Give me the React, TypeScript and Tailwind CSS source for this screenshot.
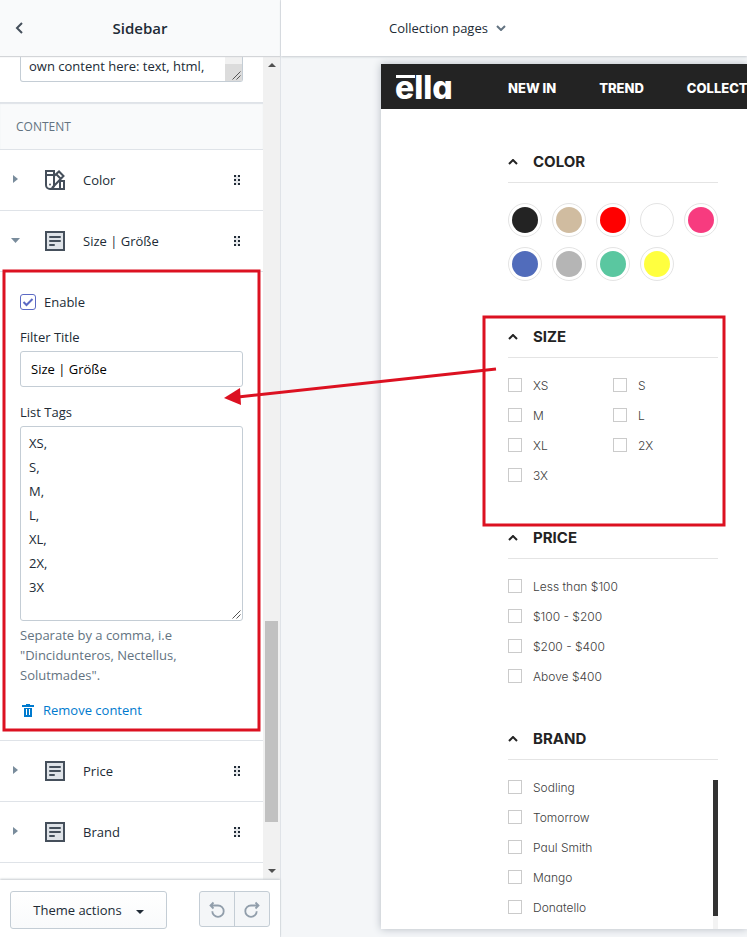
import React from "react";

const UI_FONT = "font-['Open_Sans','Noto_Sans',sans-serif]";
const SHOP_FONT = "font-[Inter,'Liberation_Sans',sans-serif] [font-feature-settings:'cv11']";

function ListIcon() {
  return (
    <svg width="20" height="20" viewBox="0 0 20 20" aria-hidden="true">
      <rect x="1" y="1" width="18" height="18" fill="#dfe3e8" stroke="#454f5b" strokeWidth="2" />
      <path d="M5 6h10M5 10h10M5 14h4" stroke="#454f5b" strokeWidth="2" strokeLinecap="round" />
    </svg>
  );
}

function SwatchIcon() {
  return (
    <svg width="20" height="20" viewBox="0 0 20 20" fill="none" stroke="#454f5b" strokeWidth="2" aria-hidden="true">
      <path d="M1 1h8v14a4 4 0 0 1-8 0z" fill="#fff" />
      <path d="M1 5h8" />
      <path d="M9 6l5-4.500 4.500 4.500L7 18M11 4l5 5" />
      <path d="M5 19h14v-8h-4M15 11v8" />
      <circle cx="5" cy="14.500" r="0.900" fill="#454f5b" stroke="none" />
    </svg>
  );
}

function DragDots() {
  return (
    <svg width="6" height="10" viewBox="0 0 6 10" fill="#212b36" aria-hidden="true">
      <path d="M0 0h6v10H0z" fill="#e4e6e9" />
      {[0, 4, 8].map((y) => (
        <g key={y}>
          <rect x="0" y={y} width="2" height="2" />
          <rect x="4" y={y} width="2" height="2" />
        </g>
      ))}
    </svg>
  );
}

function BlockRow({ title, icon, open = false }: { title: string; icon: React.ReactNode; open?: boolean }) {
  return (
    <div className="flex h-[61px] shrink-0 items-center border-b border-[#dfe3e8] pr-[23px] pl-2.5">
      <button type="button" aria-expanded={open} className="flex flex-1 items-center text-left">
        <svg width="10" height="12" viewBox="0 0 10 12" fill="#798c9c" aria-hidden="true">
          <path d={open ? "M1 3h9L5.500 8z" : "M3 1v8l5-4z"} />
        </svg>
        <span className="ml-[25px]">{icon}</span>
        <span className="ml-[18px]">{title}</span>
      </button>
      <DragDots />
    </div>
  );
}

function Heading({ children }: { children: React.ReactNode }) {
  return (
    <h2 className="border-b border-[#e4e4e4] pb-2.5">
      <button type="button" className="flex w-full items-center text-left text-[15px] leading-5 font-bold text-[#232323]">
        <svg width="10" height="6" viewBox="0 0 10 6" fill="none" stroke="#232323" strokeWidth="2" aria-hidden="true">
          <path d="M1 5l4-4 4 4" />
        </svg>
        <span className="ml-[15px]">{children}</span>
      </button>
    </h2>
  );
}

function Option({ label }: { label: string }) {
  return (
    <label className="flex h-3.5 items-center gap-[11px]">
      <input type="checkbox" className="size-3.5 shrink-0 appearance-none border border-[#cbcbcb] bg-white" />
      <span className="pt-0.5">{label}</span>
    </label>
  );
}

const swatches = [
  ["Black", "bg-[#232323]"],
  ["Beige", "bg-[#d0bca0]"],
  ["Red", "bg-[#ff0000]"],
  ["White", "bg-white"],
  ["Pink", "bg-[#f73b7f]"],
  ["Blue", "bg-[#516cbb]"],
  ["Grey", "bg-[#b5b5b5]"],
  ["Green", "bg-[#5ac7a0]"],
  ["Yellow", "bg-[#ffff3f]"],
];

function EditorSidebar() {
  return (
    <aside className="flex w-[281px] shrink-0 flex-col border-r border-[#dfe3e8] bg-white">
      <header className="relative z-10 flex h-14 shrink-0 items-center bg-[#f9fafb] px-[15px] shadow-[0_1px_1px_#d3d5d8]">
        <button type="button" aria-label="Back">
          <svg width="8" height="12" viewBox="0 0 8 12" fill="none" stroke="#454f5b" strokeWidth="2" aria-hidden="true">
            <path d="M7 1L2 6l5 5" />
          </svg>
        </button>
        <h1 className="flex-1 pr-2 text-center text-[15px] leading-6 font-semibold text-[#212b36]">Sidebar</h1>
      </header>

      <div className="flex min-h-0 flex-1">
        <div className="flex min-w-0 flex-1 flex-col overflow-hidden">
          <div className="shrink-0 px-5 pb-5">
            <div className="relative flex">
              <textarea
                aria-label="Custom content"
                readOnly
                className="h-[26px] w-full resize-none overflow-hidden rounded-b-[3px] border border-t-0 border-[#c4cdd5] px-2 leading-5"
                defaultValue="own content here: text, html,"
              />
              <span className="absolute right-px bottom-px flex h-[25px] w-[17px] flex-col bg-[#f1f1f1]">
                <span className="mt-auto flex h-[17px] items-end justify-end bg-[#dcdcdc] p-px">
                  <ResizeGrip />
                </span>
              </span>
            </div>
          </div>
          <h2 className="flex h-12 shrink-0 items-center border-y border-[#dfe3e8] bg-[#f9fafb] px-4 pt-0.5 text-xs font-medium text-[#637381] shadow-[inset_0_1px_1px_#dfe3e8]">
            CONTENT
          </h2>
          <BlockRow title="Color" icon={<SwatchIcon />} />
          <BlockRow title="Size | Größe" icon={<ListIcon />} open />

          <section className="flex shrink-0 flex-col border-b border-[#dfe3e8] p-5">
            <label className="flex items-center gap-2">
              <span className="relative flex">
                <input
                  type="checkbox"
                  defaultChecked
                  className="peer size-4 appearance-none rounded-[3px] border border-[#5c6ac4] bg-white"
                />
                <svg
                  className="pointer-events-none absolute inset-0 hidden peer-checked:block"
                  width="16"
                  height="16"
                  viewBox="0 0 16 16"
                  fill="none"
                  stroke="#5c6ac4"
                  strokeWidth="2"
                  aria-hidden="true"
                >
                  <path d="M3.500 8l3 3 6-6" />
                </svg>
              </span>
              Enable
            </label>
            <label htmlFor="filter-title" className="mt-[15px]">
              Filter Title
            </label>
            <input
              id="filter-title"
              type="text"
              defaultValue="Size | Größe"
              className="mt-1 h-9 rounded-[3px] border border-[#c4cdd5] px-2.5 text-black"
            />
            <label htmlFor="list-tags" className="mt-[15px]">
              List Tags
            </label>
            <div className="relative mt-1 flex">
              <textarea
                id="list-tags"
                defaultValue={"XS,\nS,\nM,\nL,\nXL,\n2X,\n3X"}
                className="h-[195px] w-full resize-none rounded-[3px] border border-[#c4cdd5] px-2 py-1 leading-6"
              />
              <span className="pointer-events-none absolute right-0.5 bottom-0.5">
                <ResizeGrip />
              </span>
            </div>
            <p className="mt-1 text-[#637381]">Separate by a comma, i.e "Dincidunteros, Nectellus, Solutmades".</p>
            <button type="button" className="mt-[15px] flex items-center gap-2 self-start pl-0.5 text-[#007ace]">
              <svg width="13" height="14" viewBox="0 0 13 14" fill="#007ace" aria-hidden="true">
                <path d="M4 1h4v1h4v2H0V2h4zM2 5h8v9H2zM4 6v6h1V6zm3 0v6h1V6z" fillRule="evenodd" />
              </svg>
              Remove content
            </button>
          </section>

          <BlockRow title="Price" icon={<ListIcon />} />
          <BlockRow title="Brand" icon={<ListIcon />} />
        </div>

        <div className="flex w-[17px] shrink-0 flex-col items-center bg-[#f1f1f1] py-[7px]" aria-hidden="true">
          <svg width="8" height="4" viewBox="0 0 8 4" fill="#505050">
            <path d="M0 4l4-4 4 4z" />
          </svg>
          <span className="grow-[554]" />
          <span className="w-[13px] grow-[201] bg-[#c1c1c1]" />
          <span className="grow-[47]" />
          <svg width="8" height="4" viewBox="0 0 8 4" fill="#505050">
            <path d="M0 0h8L4 4z" />
          </svg>
        </div>
      </div>

      <footer className="relative z-10 flex h-[57px] shrink-0 items-start justify-between bg-white px-2.5 pt-[11px] shadow-[0_-1px_2px_#c8ccd0]">
        <button
          type="button"
          className="flex h-[38px] w-[157px] items-center justify-center gap-3.5 rounded-[3px] border border-[#c4cdd5] bg-linear-to-b from-white to-[#f9fafb]"
        >
          Theme actions
          <svg className="mt-1" width="8" height="4" viewBox="0 0 8 4" fill="#212b36" aria-hidden="true">
            <path d="M0 0h8L4 4z" />
          </svg>
        </button>
        <div className="flex h-9 divide-x divide-[#c4cdd5] rounded-[3px] border border-[#c4cdd5] bg-[#f4f6f8]">
          <button type="button" aria-label="Undo" className="flex w-[35px] items-center justify-center">
            <TurnIcon />
          </button>
          <button type="button" aria-label="Redo" className="flex w-[34px] items-center justify-center">
            <span className="-scale-x-100">
              <TurnIcon />
            </span>
          </button>
        </div>
      </footer>
    </aside>
  );
}

function ResizeGrip() {
  return (
    <svg width="9" height="9" viewBox="0 0 9 9" stroke="#555" aria-hidden="true">
      <path d="M0.500 8.500l8-8M4.500 8.500l4-4" />
    </svg>
  );
}

function TurnIcon() {
  return (
    <svg width="16" height="17" viewBox="0 0 16 17" fill="none" stroke="#919eab" strokeWidth="1.800" aria-hidden="true">
      <path d="M1 4.500h8a5.700 5.700 0 1 1-5.700 5.700M4.500 1.500l-3 3 3 3" />
    </svg>
  );
}

function Preview() {
  return (
    <div className="flex min-h-0 flex-1 overflow-hidden pt-2 pb-2 pl-[100px]">
      <div
        className={`flex w-full min-w-0 flex-col overflow-hidden bg-white shadow-[0_0_8px_#b4bac2] ${SHOP_FONT}`}
      >
        <div className="flex h-[45px] shrink-0 items-center overflow-hidden bg-[#232323] pl-3.5 text-[13px] font-extrabold whitespace-nowrap text-white">
          <div className="relative w-[113px] shrink-0 pt-0.5 text-[32px] leading-[43px]">
            ella
            <span className="absolute top-[11px] left-px h-[3px] w-[19px] bg-white" />
          </div>
          <nav className="flex gap-[43px] pt-0.5">
            <a href="#new">NEW IN</a>
            <a href="#trend">TREND</a>
            <a href="#collection">COLLECTION</a>
          </nav>
        </div>

        <div className="ml-[127px] flex min-h-0 w-[210px] flex-1 flex-col gap-[46px] pt-[43px] text-xs font-light text-[#404040]">
          <section className="shrink-0">
            <Heading>COLOR</Heading>
            <div className="mt-5 flex flex-wrap gap-2.5">
              {swatches.map(([name, color]) => (
                <button
                  key={name}
                  type="button"
                  aria-label={name}
                  className={`size-[34px] rounded-full border border-[#e4e4e4] bg-clip-content p-[3px] ${color}`}
                />
              ))}
            </div>
          </section>
          <section className="shrink-0">
            <Heading>SIZE</Heading>
            <div className="mt-5 grid grid-cols-2 gap-y-4">
              {["XS", "S", "M", "L", "XL", "2X", "3X"].map((s) => (
                <Option key={s} label={s} />
              ))}
            </div>
          </section>
          <section className="shrink-0">
            <Heading>PRICE</Heading>
            <div className="mt-5 flex flex-col gap-4">
              {["Less than $100", "$100 - $200", "$200 - $400", "Above $400"].map((s) => (
                <Option key={s} label={s} />
              ))}
            </div>
          </section>
          <section className="flex min-h-0 flex-1 flex-col">
            <Heading>BRAND</Heading>
            <div className="mt-5 flex min-h-0 flex-1 justify-between overflow-hidden">
              <div className="flex flex-col gap-4">
                {["Sodling", "Tomorrow", "Paul Smith", "Mango", "Donatello"].map((s) => (
                  <Option key={s} label={s} />
                ))}
              </div>
              <span className="w-[5px] bg-[#f3f3f3]">
                <span className="block h-[136px] bg-[#323232]" />
              </span>
            </div>
          </section>
        </div>
      </div>
    </div>
  );
}

export default function App() {
  return (
    <div className={`relative flex h-screen overflow-hidden bg-[#f4f6f8] text-[13px] leading-5 text-[#212b36] ${UI_FONT}`}>
      <EditorSidebar />
      <main className="flex min-w-0 flex-1 flex-col">
        <header className="relative z-10 flex h-14 shrink-0 items-center bg-white pl-[108px] shadow-[0_1px_2px_#c8ccd0]">
          <button type="button" className="flex items-center gap-2">
            Collection pages
            <svg width="10" height="6" viewBox="0 0 10 6" fill="none" stroke="#637381" strokeWidth="2" aria-hidden="true">
              <path d="M1 1l4 4 4-4" />
            </svg>
          </button>
        </header>
        <Preview />
      </main>

      <svg
        className="pointer-events-none absolute top-0 left-0 z-20"
        width="747"
        height="937"
        viewBox="0 0 747 937"
        fill="none"
        stroke="#dc1121"
        strokeWidth="3"
        aria-hidden="true"
      >
        <rect x="4" y="271" width="255" height="459" />
        <rect x="484" y="317" width="240" height="208" />
        <path d="M496 369L238 397" />
        <path d="M224 398l16-10 1 17z" fill="#dc1121" stroke="none" />
      </svg>
    </div>
  );
}
